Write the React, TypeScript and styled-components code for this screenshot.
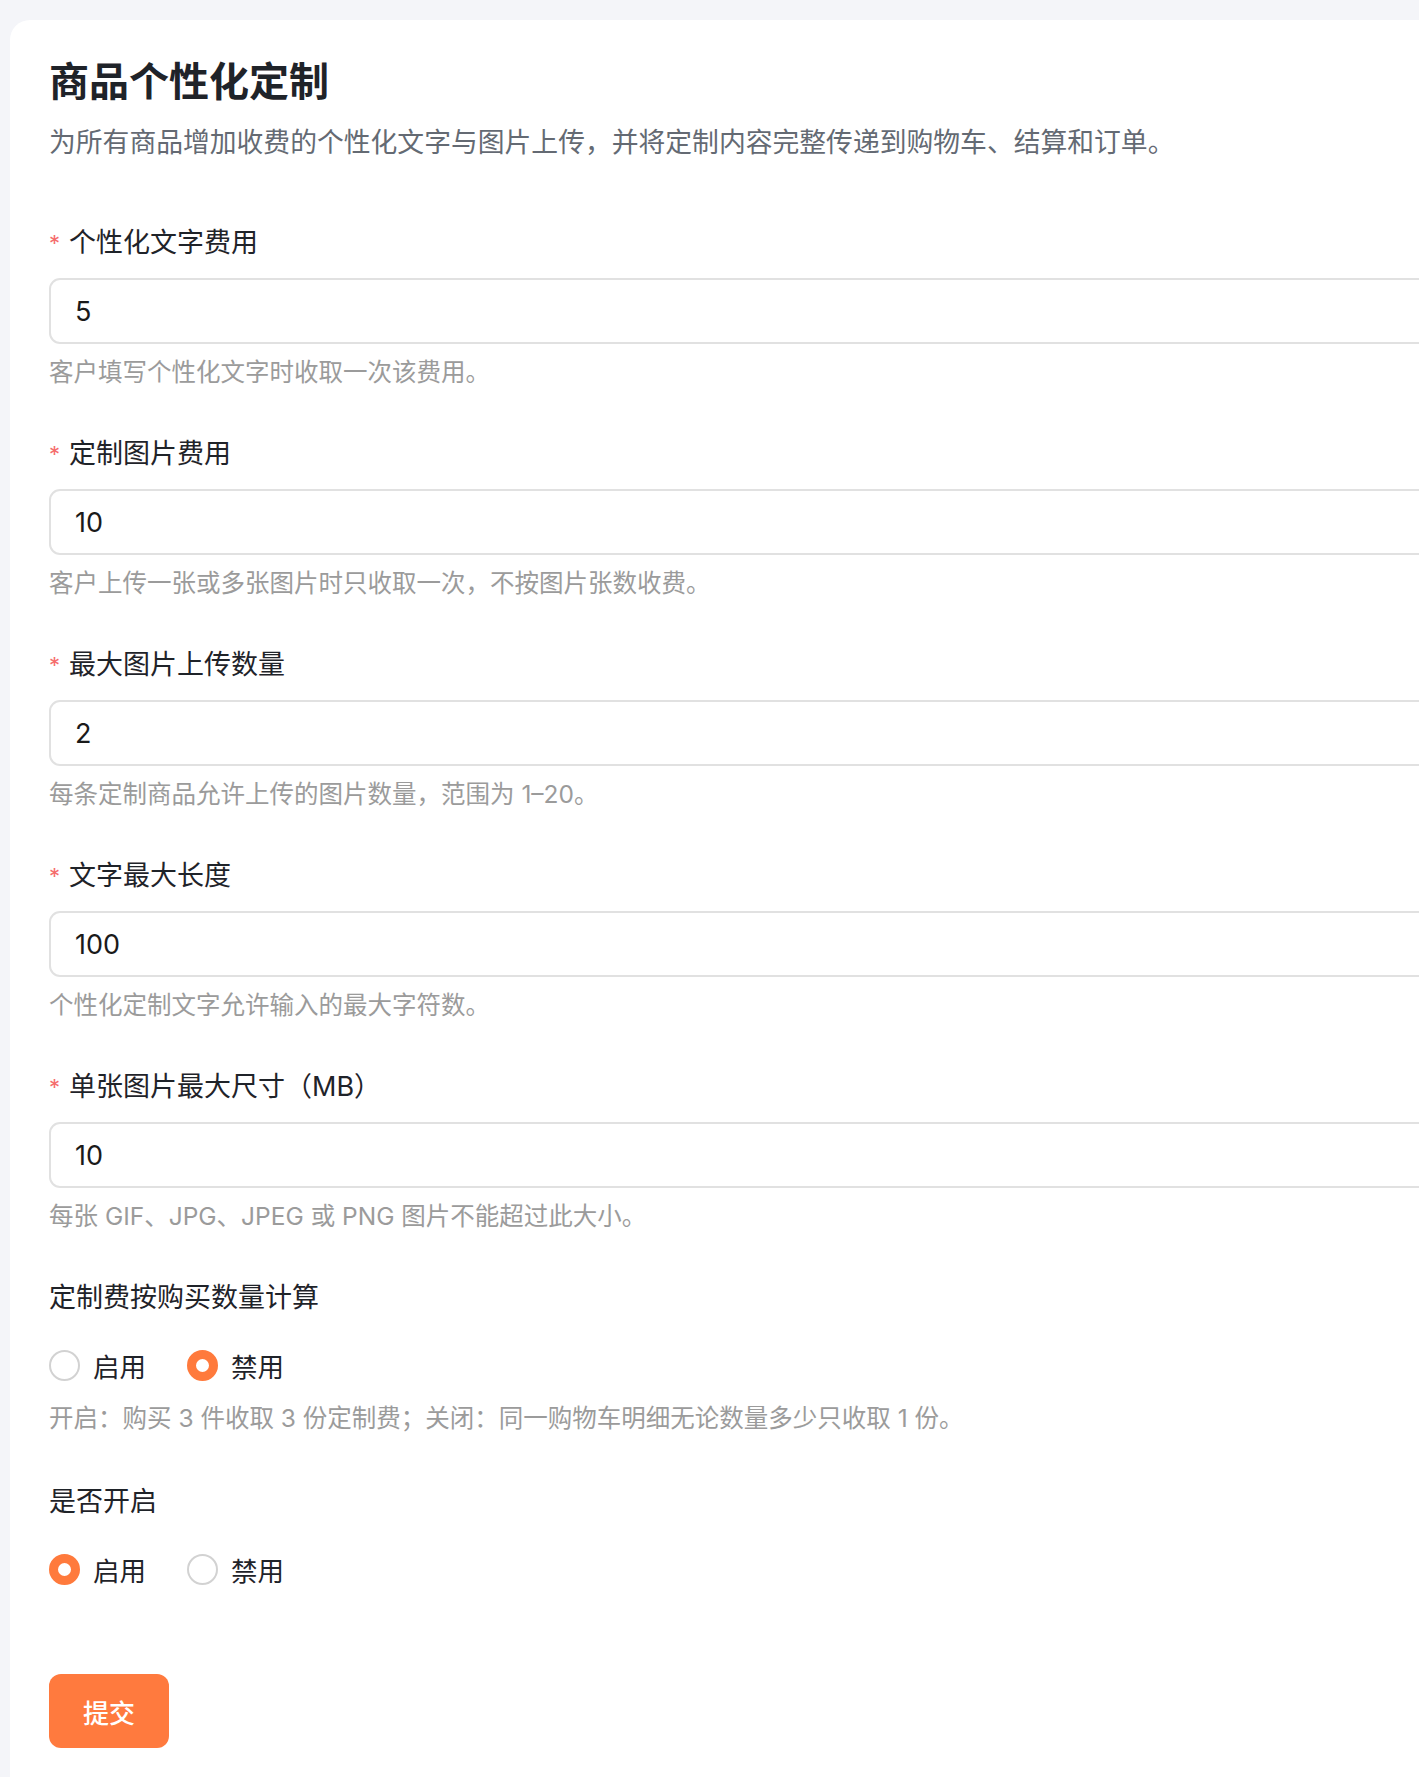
import { styled, createGlobalStyle } from "styled-components";
import { useState } from "react";

const GlobalStyle = createGlobalStyle`
  html, body {
    margin: 0;
    padding: 0;
    background: #f4f5f9;
    overflow-x: hidden;
  }
  body {
    font-family: "Inter", "Noto Sans CJK SC", "Noto Sans", sans-serif;
    color: #1f2329;
  }
  * { box-sizing: border-box; }
`;

const Page = styled.div`
  padding: 20px 0 0 10px;
  min-height: 1777px;
`;

const Card = styled.div`
  width: 1480px;
  min-height: 1757px;
  background: #ffffff;
  border-radius: 20px 0 0 0;
  padding: 34px 0 40px 39px;
  display: flex;
  flex-direction: column;
`;

const Title = styled.h1`
  margin: 0;
  font-size: 40px;
  line-height: 56px;
  font-weight: 600;
  color: #1f2329;
`;

const Subtitle = styled.p`
  margin: 12px 0 0;
  font-size: 26.8px;
  line-height: 40px;
  color: #646a73;
`;

const Form = styled.form`
  margin-top: 62px;
  display: flex;
  flex-direction: column;
`;

const Field = styled.div<{ $after?: number }>`
  display: flex;
  flex-direction: column;
  margin-bottom: ${(p) => p.$after ?? 46}px;
`;

const Label = styled.label`
  display: flex;
  align-items: center;
  height: 38px;
  font-size: 27px;
  line-height: 38px;
  color: #1f2329;
`;

const Star = styled.span`
  color: #f56c6c;
  font-size: 22px;
  line-height: 22px;
  width: 20px;
`;

const Input = styled.input`
  margin-top: 16px;
  height: 66px;
  width: 100%;
  border: 2px solid #e1e1e1;
  border-radius: 11px;
  padding: 0 24px;
  font-family: inherit;
  font-size: 27px;
  color: #1a1a1a;
  outline: none;
  background: #fff;
`;

const Hint = styled.div<{ $gap?: number }>`
  margin-top: ${(p) => p.$gap ?? 11}px;
  font-size: 24.5px;
  line-height: 34px;
  color: #9b9b9b;
`;

const RadioRow = styled.div<{ $gap: number }>`
  margin-top: ${(p) => p.$gap}px;
  display: flex;
  align-items: center;
  gap: 41px;
  height: 40px;
`;

const RadioOption = styled.label`
  display: flex;
  align-items: center;
  gap: 13px;
  font-size: 26.5px;
  color: #1f2329;
  cursor: pointer;
`;

const Circle = styled.span<{ $on: boolean }>`
  width: 31px;
  height: 31px;
  border-radius: 50%;
  border: ${(p) => (p.$on ? "9px solid #ff7a3c" : "2px solid #d2d2d2")};
  background: #fff;
  display: inline-block;
`;

const Submit = styled.button`
  margin-top: 85px;
  align-self: flex-start;
  width: 120px;
  height: 74px;
  border: none;
  border-radius: 12px;
  background: #ff7a3e;
  color: #fff;
  font-family: inherit;
  font-size: 26px;
  font-weight: 500;
  cursor: pointer;
  &:hover {
    opacity: 0.9;
  }
`;

const fields = [
  { label: "个性化文字费用", value: "5", hint: "客户填写个性化文字时收取一次该费用。" },
  { label: "定制图片费用", value: "10", hint: "客户上传一张或多张图片时只收取一次，不按图片张数收费。" },
  { label: "最大图片上传数量", value: "2", hint: "每条定制商品允许上传的图片数量，范围为 1–20。" },
  { label: "文字最大长度", value: "100", hint: "个性化定制文字允许输入的最大字符数。" },
  { label: "单张图片最大尺寸（MB）", value: "10", hint: "每张 GIF、JPG、JPEG 或 PNG 图片不能超过此大小。" },
];

function Radio({ value, onChange, gap }: { value: boolean; onChange: (v: boolean) => void; gap: number }) {
  return (
    <RadioRow $gap={gap}>
      <RadioOption onClick={() => onChange(true)}>
        <Circle $on={value} />
        启用
      </RadioOption>
      <RadioOption onClick={() => onChange(false)}>
        <Circle $on={!value} />
        禁用
      </RadioOption>
    </RadioRow>
  );
}

export default function App() {
  const [values, setValues] = useState(fields.map((f) => f.value));
  const [perQty, setPerQty] = useState(false);
  const [enabled, setEnabled] = useState(true);

  const onChange = (i: number) => (e: React.ChangeEvent<HTMLInputElement>) => {
    const next = [...values];
    next[i] = e.target.value;
    setValues(next);
  };

  return (
    <Page>
      <GlobalStyle />
      <Card>
        <Title>商品个性化定制</Title>
        <Subtitle>为所有商品增加收费的个性化文字与图片上传，并将定制内容完整传递到购物车、结算和订单。</Subtitle>
        <Form onSubmit={(e) => e.preventDefault()}>
          {fields.map((f, i) => (
            <Field key={f.label}>
              <Label>
                <Star>*</Star>
                {f.label}
              </Label>
              <Input value={values[i]} onChange={onChange(i)} />
              <Hint>{f.hint}</Hint>
            </Field>
          ))}
          <Field $after={48}>
            <Label>定制费按购买数量计算</Label>
            <Radio value={perQty} onChange={setPerQty} gap={28} />
            <Hint $gap={16}>开启：购买 3 件收取 3 份定制费；关闭：同一购物车明细无论数量多少只收取 1 份。</Hint>
          </Field>
          <Label>是否开启</Label>
          <Radio value={enabled} onChange={setEnabled} gap={28} />
          <Submit type="submit">提交</Submit>
        </Form>
      </Card>
    </Page>
  );
}
